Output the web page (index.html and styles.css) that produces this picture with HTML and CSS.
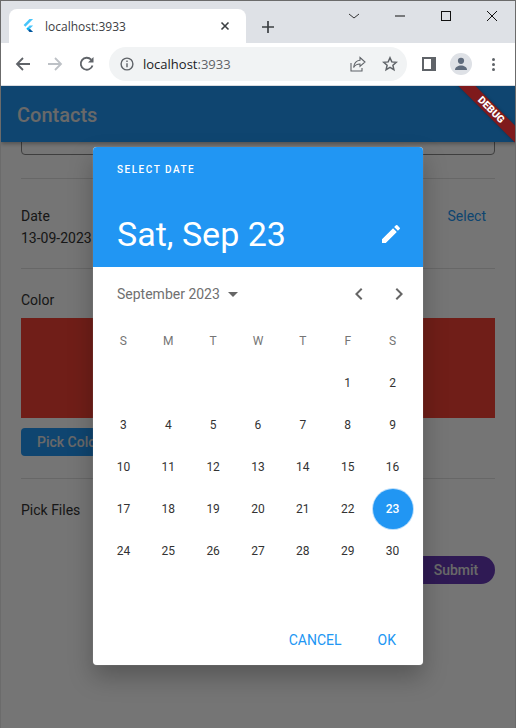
FILE: index.html
```html
<!DOCTYPE html>
<html lang="en">
<head>
    <meta charset="UTF-8">
    <meta name="viewport" content="width=device-width, initial-scale=1.0">
    <title>Contacts</title>
    <link rel="stylesheet" href="styles.css">
</head>
<body>
    <div class="window">
        <div class="tabstrip">
            <div class="tab">
                <svg class="favicon" viewBox="0 0 16 16" width="16" height="16">
                    <path fill="#47c5fb" d="M9.500 1h3.600L5.400 8.700 3.600 6.900z"/>
                    <path fill="#47c5fb" d="M9.500 7.600h3.600L9.900 10.800 8.100 9z"/>
                    <path fill="#00b5f8" d="M6.300 10.700l1.800-1.700 1.800 1.800-1.800 1.800z"/>
                    <path fill="#00569e" d="M8.100 12.600l1.800-1.800 3.200 3.200H9.500z"/>
                </svg>
                <span class="tab-title">localhost:3933</span>
                <svg class="tab-close" viewBox="0 0 10 10" width="10" height="10">
                    <path d="M1.500 1.500l7 7M8.500 1.500l-7 7" stroke="#3c4043" stroke-width="1.600" fill="none"/>
                </svg>
            </div>
            <svg class="new-tab" viewBox="0 0 14 14" width="14" height="14">
                <path d="M7 1v12M1 7h12" stroke="#3c4043" stroke-width="1.700" fill="none"/>
            </svg>
            <div class="window-controls">
                <svg viewBox="0 0 12 12" width="12" height="12"><path d="M1 4l5 4 5-4" stroke="#333" fill="none"/></svg>
                <svg viewBox="0 0 12 12" width="12" height="12"><path d="M1 6h10" stroke="#111" fill="none"/></svg>
                <svg viewBox="0 0 12 12" width="12" height="12"><rect x="1.500" y="1.500" width="9" height="9" stroke="#111" fill="none"/></svg>
                <svg viewBox="0 0 12 12" width="12" height="12"><path d="M1 1l10 10M11 1L1 11" stroke="#111" fill="none"/></svg>
            </div>
        </div>

        <div class="toolbar">
            <svg class="tool" viewBox="0 0 16 16" width="16" height="16"><path d="M15 8H2M8 2L2 8l6 6" stroke="#5f6368" stroke-width="1.800" fill="none"/></svg>
            <svg class="tool" viewBox="0 0 16 16" width="16" height="16"><path d="M1 8h13M8 2l6 6-6 6" stroke="#bdc1c6" stroke-width="1.800" fill="none"/></svg>
            <svg class="tool" viewBox="0 0 16 16" width="16" height="16"><path d="M13.500 9.500A6 6 0 1 1 12.200 3.700" stroke="#5f6368" stroke-width="1.800" fill="none"/><path d="M14.500 1v5.500H9z" fill="#5f6368"/></svg>
            <div class="omnibox">
                <svg class="omni-info" viewBox="0 0 14 14" width="14" height="14">
                    <circle cx="7" cy="7" r="5.900" stroke="#5f6368" stroke-width="1.400" fill="none"/>
                    <path d="M7 6.200v4M7 3.600v1.400" stroke="#5f6368" stroke-width="1.400" fill="none"/>
                </svg>
                <span class="omni-url">localhost<span class="omni-port">:3933</span></span>
                <svg class="omni-share" viewBox="0 0 16 16" width="16" height="16">
                    <path d="M1 7v8h11v-3" stroke="#5f6368" stroke-width="1.100" fill="none"/>
                    <path d="M10 1.500L15 6l-5 4.300V8C7 8 5 9 3.600 11.500 4 7.500 6.500 4.500 10 4.200z" stroke="#5f6368" stroke-width="1.100" fill="none"/>
                </svg>
                <svg class="omni-star" viewBox="0 0 16 16" width="16" height="16">
                    <path d="M8 1.800l1.800 4.100 4.500.4-3.400 3 1 4.400L8 11.400l-3.900 2.300 1-4.400-3.400-3 4.500-.4z" stroke="#5f6368" stroke-width="1.500" fill="none"/>
                </svg>
            </div>
            <div class="side-panel"></div>
            <div class="avatar">
                <svg viewBox="0 0 14 14" width="14" height="14">
                    <circle cx="7" cy="3.800" r="3.100" fill="#5f6b7c"/>
                    <path d="M1 13c0-3 3-4.500 6-4.500s6 1.500 6 4.500z" fill="#5f6b7c"/>
                </svg>
            </div>
            <div class="kebab"><i></i><i></i><i></i></div>
        </div>

        <div class="app">
            <header class="appbar">Contacts</header>
            <main class="form">
                <div class="text-box"></div>
                <hr class="rule">
                <div class="date-row">
                    <div>
                        <p class="label">Date</p>
                        <p class="label">13-09-2023</p>
                    </div>
                    <span class="link">Select</span>
                </div>
                <hr class="rule">
                <p class="label color-label">Color</p>
                <div class="swatch"></div>
                <button class="pick-btn" type="button">Pick Color</button>
                <hr class="rule rule-files">
                <p class="label files-label">Pick Files</p>
                <div class="submit-row">
                    <button class="submit-btn" type="button">Submit</button>
                </div>
            </main>

            <div class="scrim"></div>
            <div class="debug-banner">DEBUG</div>

            <section class="dialog">
                <div class="dialog-head">
                    <p class="dialog-help">SELECT DATE</p>
                    <div class="dialog-title">
                        <h1>Sat, Sep 23</h1>
                        <svg viewBox="0 0 24 24" width="24" height="24">
                            <path fill="#fff" d="M3 17.250V21h3.750L17.810 9.940l-3.750-3.750L3 17.250zM20.710 7.040a1 1 0 0 0 0-1.410l-2.340-2.340a1 1 0 0 0-1.410 0l-1.830 1.830 3.750 3.750 1.830-1.830z"/>
                        </svg>
                    </div>
                </div>
                <div class="month-row">
                    <span class="month-name">September 2023</span>
                    <svg class="month-caret" viewBox="0 0 10 5" width="10" height="5"><path fill="#666" d="M0 0h10L5 5z"/></svg>
                    <svg class="chevron chevron-prev" viewBox="0 0 24 24" width="24" height="24"><path fill="#666" d="M15.410 7.410L14 6l-6 6 6 6 1.410-1.410L10.830 12z"/></svg>
                    <svg class="chevron" viewBox="0 0 24 24" width="24" height="24"><path fill="#666" d="M10 6L8.590 7.410 13.170 12l-4.580 4.590L10 18l6-6z"/></svg>
                </div>
                <div class="calendar">
                    <span class="dow">S</span><span class="dow">M</span><span class="dow">T</span><span class="dow">W</span><span class="dow">T</span><span class="dow">F</span><span class="dow">S</span>
                    <span></span><span></span><span></span><span></span><span></span><span class="day">1</span><span class="day">2</span>
                    <span class="day">3</span><span class="day">4</span><span class="day">5</span><span class="day">6</span><span class="day">7</span><span class="day">8</span><span class="day">9</span>
                    <span class="day">10</span><span class="day">11</span><span class="day">12</span><span class="day">13</span><span class="day">14</span><span class="day">15</span><span class="day">16</span>
                    <span class="day">17</span><span class="day">18</span><span class="day">19</span><span class="day">20</span><span class="day">21</span><span class="day">22</span><span class="day selected"><b>23</b></span>
                    <span class="day">24</span><span class="day">25</span><span class="day">26</span><span class="day">27</span><span class="day">28</span><span class="day">29</span><span class="day">30</span>
                </div>
                <div class="dialog-actions">
                    <span class="action">CANCEL</span>
                    <span class="action">OK</span>
                </div>
            </section>
        </div>
    </div>
</body>
</html>
```

FILE: styles.css
```css
html, body {
    margin: 0;
    padding: 0;
}

body {
    font-family: Roboto, sans-serif;
    background-color: #fff;
}

.window {
    width: 516px;
    height: 728px;
    box-sizing: border-box;
    display: flex;
    flex-direction: column;
    overflow: hidden;
    border: 1px solid #6b6b6b;
    border-bottom: none;
}

/* browser chrome */
.tabstrip {
    height: 42px;
    flex-shrink: 0;
    display: flex;
    align-items: flex-end;
    padding-left: 8px;
    background-color: #dee1e6;
    position: relative;
}

.tab {
    width: 237px;
    height: 34px;
    display: flex;
    align-items: center;
    box-sizing: border-box;
    padding: 0 16px 0 11px;
    background-color: #fff;
    border-radius: 8px 8px 0 0;
}

.favicon {
    flex-shrink: 0;
}

.tab-title {
    flex: 1;
    margin-left: 9px;
    font-family: "Open Sans", sans-serif;
    font-size: 12px;
    color: #3c4043;
}

.new-tab {
    margin: 0 0 9px 15px;
}

.window-controls {
    position: absolute;
    top: 9px;
    right: 17px;
    display: flex;
    gap: 34px;
}

.toolbar {
    height: 42px;
    flex-shrink: 0;
    display: flex;
    align-items: center;
    padding-left: 14px;
    background-color: #fff;
    border-bottom: 1px solid #dadce0;
}

.tool {
    margin-right: 16px;
}

.omnibox {
    width: 298px;
    height: 34px;
    margin-left: -2px;
    display: flex;
    align-items: center;
    box-sizing: border-box;
    padding: 0 9px 0 11px;
    background-color: #f1f3f4;
    border-radius: 17px;
}

.omni-url {
    flex: 1;
    margin-left: 9px;
    font-family: "Open Sans", sans-serif;
    font-size: 13px;
    color: #202124;
}

.omni-port {
    color: #5f6368;
}

.omni-star {
    margin-left: 16px;
}

.side-panel {
    width: 14px;
    height: 14px;
    margin-left: 15px;
    box-sizing: border-box;
    background-color: #fff;
    border: 2px solid #5f6368;
    border-right-width: 5px;
}

.avatar {
    width: 22px;
    height: 22px;
    margin-left: 14px;
    display: flex;
    align-items: center;
    justify-content: center;
    background-color: #dee1e6;
    border-radius: 50%;
}

.kebab {
    margin-left: 20px;
    display: flex;
    flex-direction: column;
    gap: 2px;
}

.kebab i {
    width: 3px;
    height: 3px;
    background-color: #5f6368;
    border-radius: 50%;
}

/* flutter app */
.app {
    flex: 1;
    position: relative;
    overflow: hidden;
    background-color: #fff;
}

.appbar {
    height: 56px;
    box-sizing: border-box;
    padding: 1px 0 0 16px;
    display: flex;
    align-items: center;
    font-size: 20px;
    font-weight: 500;
    color: #e4e4e4;
    background-color: #2196f3;
    box-shadow: 0 2px 4px rgba(0, 0, 0, 0.3);
    position: relative;
}

.form {
    padding: 0 20px;
    margin-top: -13px;
}

.text-box {
    height: 24px;
    border: 1px solid #888;
    border-radius: 4px;
}

.rule {
    margin: 23px 0 0;
    border: none;
    border-top: 1px solid #e0e0e0;
}

.label {
    margin: 0;
    font-size: 14px;
    line-height: 22px;
    color: #333;
}

.date-row {
    display: flex;
    justify-content: space-between;
    padding: 26px 9px 19px 0;
}

.date-row + .rule {
    margin-top: 0;
}

.link {
    font-size: 14px;
    line-height: 22px;
    color: #2196f3;
}

.color-label {
    margin-top: 20px;
}

.swatch {
    height: 100px;
    margin-top: 7px;
    background-color: #f44336;
}

.pick-btn {
    width: 120px;
    height: 28px;
    margin-top: 10px;
    display: block;
    border: none;
    border-radius: 4px;
    font-family: inherit;
    font-size: 14px;
    font-weight: 500;
    text-align: left;
    padding-left: 16px;
    color: #e4e4e4;
    background-color: #2196f3;
}

.rule-files {
    margin-top: 22px;
}

.files-label {
    margin-top: 20px;
}

.submit-row {
    display: flex;
    justify-content: flex-end;
    margin-top: 35px;
}

.submit-btn {
    width: 90px;
    height: 28px;
    border: none;
    border-radius: 14px;
    font-family: inherit;
    font-size: 14px;
    font-weight: 500;
    color: #e4e4e4;
    background-color: #673ab7;
    padding: 0 0 0 12px;
}

.scrim {
    position: absolute;
    top: 0;
    right: 0;
    bottom: 0;
    left: 0;
    background-color: rgba(0, 0, 0, 0.54);
}

.debug-banner {
    position: absolute;
    top: 18px;
    right: -36px;
    width: 120px;
    height: 12px;
    line-height: 12px;
    transform: rotate(45deg);
    text-align: center;
    font-size: 10.2px;
    font-weight: 900;
    color: #fff;
    background-color: #7f1a1c;
    box-shadow: 0 0 3px rgba(0, 0, 0, 0.3);
}

/* date picker */
.dialog {
    position: absolute;
    top: 61px;
    left: 92px;
    width: 330px;
    height: 518px;
    display: flex;
    flex-direction: column;
    background-color: #fff;
    border-radius: 4px;
    overflow: hidden;
    box-shadow: 0 12px 24px rgba(0, 0, 0, 0.26), 0 0 1px rgba(255, 255, 255, 0.6);
}

.dialog-head {
    height: 120px;
    box-sizing: border-box;
    padding: 16px 24px 0;
    color: #fff;
    background-color: #2196f3;
}

.dialog-help {
    margin: 0;
    font-size: 10px;
    line-height: 13px;
    font-weight: 500;
    letter-spacing: 1.5px;
}

.dialog-title {
    margin-top: 38px;
    display: flex;
    align-items: center;
    justify-content: space-between;
}

.dialog-title h1 {
    margin: 0;
    font-size: 34px;
    line-height: 40px;
    font-weight: 400;
}

.dialog-title svg {
    margin-right: -4px;
}

.month-row {
    height: 53px;
    box-sizing: border-box;
    padding: 1px 12px 0 24px;
    display: flex;
    align-items: center;
    color: #707070;
}

.month-name {
    font-size: 14px;
}

.month-caret {
    margin-left: 8px;
}

.chevron-prev {
    margin-left: auto;
    margin-right: 16px;
}

.calendar {
    margin: 0 8px;
    display: grid;
    grid-template-columns: repeat(7, 1fr);
    grid-auto-rows: 42px;
    font-size: 12px;
}

.dow, .day {
    display: flex;
    align-items: center;
    justify-content: center;
}

.dow {
    color: #757575;
}

.day {
    color: #333;
}

.selected b {
    width: 40px;
    height: 40px;
    flex-shrink: 0;
    display: flex;
    align-items: center;
    justify-content: center;
    font-weight: 500;
    color: #fff;
    background-color: #2196f3;
    box-shadow: 0 0 0 1px #bbdefb;
    border-radius: 50%;
}

.dialog-actions {
    margin-top: auto;
    height: 50px;
    display: flex;
    justify-content: flex-end;
    align-items: center;
    gap: 36px;
    padding-right: 27px;
}

.action {
    font-size: 14px;
    color: #2196f3;
}
```
